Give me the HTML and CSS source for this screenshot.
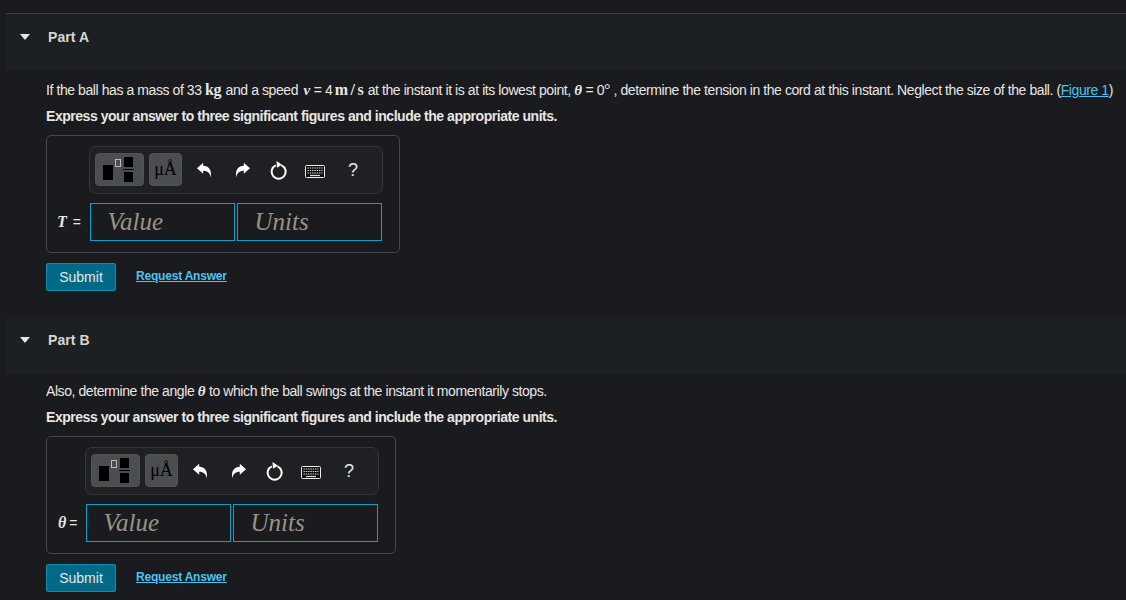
FILE: index.html
```html
<!DOCTYPE html>
<html lang="en">
<head>
<meta charset="utf-8">
<title>Parts</title>
<link rel="stylesheet" href="styles.css">
</head>
<body>
<main class="page">
  <section class="part part-a">
    <header class="part-head">
      <span class="caret"></span>
      <h2 class="part-title">Part A</h2>
    </header>
    <div class="part-body">
      <p class="question">If the ball has a mass of 33 <span class="unit">kg</span> and a speed <i class="var var-v">v</i> = 4 <span class="unit unit-speed">m/s</span> at the instant it is at its lowest point, <i class="var">θ</i> = 0<span class="deg">°</span> , determine the tension in the cord at this instant. Neglect the size of the ball. <span class="fig">(<a href="#">Figure 1</a>)</span></p>
      <p class="instruct">Express your answer to three significant figures and include the appropriate units.</p>
      <div class="answer">
        <div class="toolbar">
          <button class="tool tool-wide" type="button">
            <svg class="tool-svg" width="47" height="31" viewBox="1 1 47 31"><rect x="8" y="12" width="10" height="15" fill="#000"/><rect x="20.5" y="6.5" width="5" height="7" fill="none" stroke="#bbb"/><rect x="29" y="4" width="9" height="10" fill="#000"/><rect x="28" y="16" width="11" height="1" fill="#000"/><rect x="29" y="19" width="9" height="10" fill="#000"/></svg>
          </button>
          <button class="tool tool-unit" type="button">μÅ</button>
          <span class="ic ic-undo"><svg width="15" height="16" viewBox="0 0 15 16"><path d="M0 6.2 6.2 .8V3.8C11.5 4 15 7.500 13.800 15.500 13 11 10.500 8.800 6.200 8.800V11.800Z" fill="#fff"/></svg></span>
          <span class="ic ic-redo"><svg width="15" height="16" viewBox="0 0 15 16"><path d="M15 6.200 8.800 .8V3.800C3.500 4 0 7.500 1.200 15.500 2 11 4.500 8.800 8.800 8.800V11.800Z" fill="#fff"/></svg></span>
          <span class="ic ic-reset"><svg width="17" height="19" viewBox="0 0 17 19"><path d="M5.800 4.300A7 7 0 1 0 11.500 4.300" fill="none" stroke="#fff" stroke-width="2"/><path d="M6.500 0 12 3.800 7 6.800Z" fill="#fff"/></svg></span>
          <span class="ic ic-keys"><svg width="20" height="13" viewBox="0 0 20 13"><rect x=".5" y=".5" width="19" height="12" rx="1" fill="#111" stroke="#eee"/><path d="M2.500 3h15M2.500 5.500h15M2.500 8h15" stroke="#ddd" stroke-width="1.200" stroke-dasharray="1.400 .9"/><path d="M5 10.500h10" stroke="#ddd" stroke-width="1.200"/></svg></span>
          <span class="ic ic-help">?</span>
        </div>
        <div class="fields">
          <label class="field-label"><i class="var big">T</i> =</label>
          <div class="field">Value</div>
          <div class="field">Units</div>
        </div>
      </div>
      <div class="actions">
        <button class="submit" type="button">Submit</button>
        <a class="request" href="#">Request Answer</a>
      </div>
    </div>
  </section>

  <section class="part part-b">
    <header class="part-head">
      <span class="caret"></span>
      <h2 class="part-title">Part B</h2>
    </header>
    <div class="part-body">
      <p class="question">Also, determine the angle <i class="var">θ</i> to which the ball swings at the instant it momentarily stops.</p>
      <p class="instruct">Express your answer to three significant figures and include the appropriate units.</p>
      <div class="answer answer-b">
        <div class="toolbar">
          <button class="tool tool-wide" type="button">
            <svg class="tool-svg" width="47" height="31" viewBox="1 1 47 31"><rect x="8" y="12" width="10" height="15" fill="#000"/><rect x="20.5" y="6.5" width="5" height="7" fill="none" stroke="#bbb"/><rect x="29" y="4" width="9" height="10" fill="#000"/><rect x="28" y="16" width="11" height="1" fill="#000"/><rect x="29" y="19" width="9" height="10" fill="#000"/></svg>
          </button>
          <button class="tool tool-unit" type="button">μÅ</button>
          <span class="ic ic-undo"><svg width="15" height="16" viewBox="0 0 15 16"><path d="M0 6.2 6.2 .8V3.8C11.5 4 15 7.500 13.800 15.500 13 11 10.500 8.800 6.200 8.800V11.800Z" fill="#fff"/></svg></span>
          <span class="ic ic-redo"><svg width="15" height="16" viewBox="0 0 15 16"><path d="M15 6.200 8.800 .8V3.800C3.500 4 0 7.500 1.200 15.500 2 11 4.500 8.800 8.800 8.800V11.800Z" fill="#fff"/></svg></span>
          <span class="ic ic-reset"><svg width="17" height="19" viewBox="0 0 17 19"><path d="M5.800 4.300A7 7 0 1 0 11.500 4.300" fill="none" stroke="#fff" stroke-width="2"/><path d="M6.500 0 12 3.800 7 6.800Z" fill="#fff"/></svg></span>
          <span class="ic ic-keys"><svg width="20" height="13" viewBox="0 0 20 13"><rect x=".5" y=".5" width="19" height="12" rx="1" fill="#111" stroke="#eee"/><path d="M2.500 3h15M2.500 5.500h15M2.500 8h15" stroke="#ddd" stroke-width="1.200" stroke-dasharray="1.400 .9"/><path d="M5 10.500h10" stroke="#ddd" stroke-width="1.200"/></svg></span>
          <span class="ic ic-help">?</span>
        </div>
        <div class="fields">
          <label class="field-label"><i class="var big">θ</i> =</label>
          <div class="field">Value</div>
          <div class="field">Units</div>
        </div>
      </div>
      <div class="actions">
        <button class="submit" type="button">Submit</button>
        <a class="request" href="#">Request Answer</a>
      </div>
    </div>
  </section>
</main>
</body>
</html>
```

FILE: styles.css
```css
* { box-sizing: border-box; }
html, body { margin: 0; height: 600px; overflow: hidden; }
body { background: #1a1b1e; color: #e8e6e3; font-family: "Liberation Sans", Arial, sans-serif; font-size: 14px; }
.page { padding-top: 13px; padding-left: 6px; }
.part-a { border-top: 1px solid #3a3d3f; }
.part-b { margin-top: 26px; }
.part-head { height: 56px; background: #1c2022; display: flex; align-items: flex-start; }
.part-b .part-head { height: 57px; }
.caret { width: 0; height: 0; margin: 20px 0 0 14px; border-left: 5.5px solid transparent; border-right: 5.5px solid transparent; border-top: 6px solid #e8e6e3; }
.part-title { margin: 15px 0 0 18px; font-size: 14px; line-height: 16px; font-weight: 700; letter-spacing: 0.1px; color: #d8d5d0; }
.part-body { padding-left: 40px; }
.question { margin: 11px 0 0; font-size: 14px; line-height: 17px; height: 17px; letter-spacing: -0.42px; white-space: nowrap; color: #e8e6e3; }
.part-b .question { margin-top: 9px; }
.instruct { margin: 10px 0 0; font-size: 14px; line-height: 17px; letter-spacing: -0.46px; font-weight: 700; color: #e8e6e3; }
.part-b .instruct { margin-top: 9px; }
.unit { font-family: "Liberation Serif", serif; font-size: 16px; font-weight: 700; letter-spacing: -0.4px; margin-right: 1px; }
.unit-speed { letter-spacing: 2.500px; margin-left: -1px; margin-right: -2px; }
.var { font-family: "Liberation Serif", serif; font-weight: 700; font-style: italic; font-size: 15px; letter-spacing: 0; }
.var-v { margin: 0 0 0 2px; }
.deg { font-family: "Liberation Serif", serif; font-size: 16px; }
.fig a, .request { color: #4dc3f0; }
.answer { width: 354px; height: 118px; margin-top: 10px; padding: 10px 16px 0 43px; border: 1px solid #45484a; border-radius: 5px; }
.answer-b { width: 350px; padding-left: 39px; }
.toolbar { width: 294px; height: 48px; margin-left: -1px; display: flex; align-items: flex-start; padding-left: 5px; border: 1px solid #333638; border-radius: 7px; background: #1f2023; }
.tool { height: 33px; margin-top: 6px; padding: 0; border: 1px solid #55534e; border-radius: 4px; background: #4a4e51; display: flex; align-items: center; justify-content: center; }
.tool-wide { width: 49px; }
.tool-svg { display: block; }
.tool-unit { width: 33px; margin-left: 5px; font-family: "Liberation Serif", serif; font-size: 18px; color: #000; }
.ic { display: flex; justify-content: center; align-items: center; height: 20px; color: #e8e6e3; }
.ic-undo { width: 15px; margin: 13px 0 0 15px; }
.ic-redo { width: 15px; margin: 13px 0 0 23px; }
.ic-reset { width: 17px; margin: 13px 0 0 20px; }
.ic-keys { width: 20px; margin: 14px 0 0 18px; }
.ic-help { width: 12px; margin: 13px 0 0 22px; font-size: 18px; }
.fields { display: flex; align-items: center; margin-top: 9px; }
.field-label { width: 43px; margin-left: -43px; padding-left: 10px; font-size: 14px; white-space: nowrap; }
.answer-b .field-label { padding-left: 15px; }
.big { font-size: 16px; margin-right: 2px; }
.answer-b .big { margin-right: -1px; }
.field { width: 145px; height: 38px; padding-left: 16.500px; border: 1px solid #0f9fcb; font-family: "Liberation Serif", serif; font-style: italic; font-size: 25px; line-height: 35px; color: #9b9287; }
.field + .field { margin-left: 2px; }
.actions { display: flex; align-items: flex-start; margin-top: 10px; }
.submit { width: 70px; height: 28px; padding: 0; border: 1px solid #0d8fb5; border-radius: 2px; background: #026a87; color: #e8e6e3; font-family: "Liberation Sans", Arial, sans-serif; font-size: 14px; }
.request { margin: 6px 0 0 20px; font-size: 12px; line-height: 15px; letter-spacing: -0.2px; font-weight: 700; }
```
